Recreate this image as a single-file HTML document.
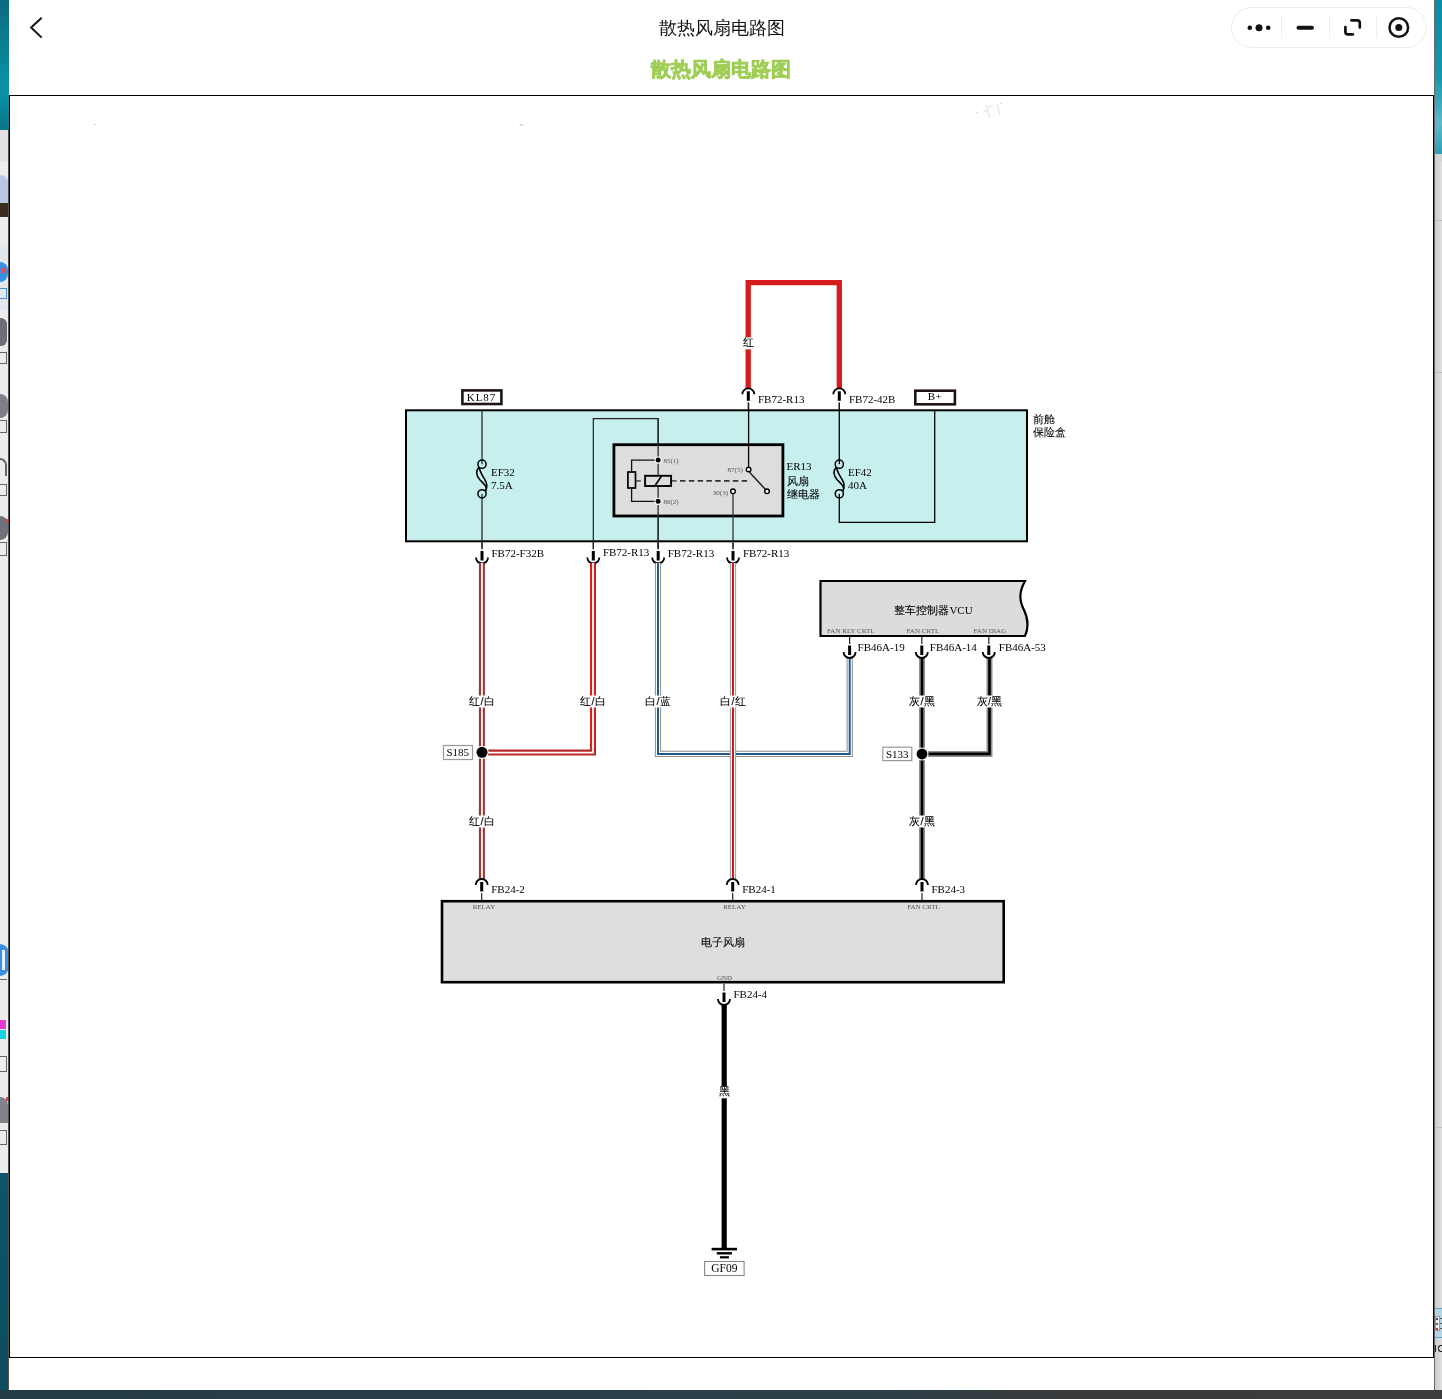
<!DOCTYPE html>
<html><head><meta charset="utf-8"><title>散热风扇电路图</title>
<style>
html,body{margin:0;padding:0;width:1442px;height:1399px;overflow:hidden;background:#2f3b40;}
.abs{position:absolute;}
</style></head><body>
<!-- left app strip -->
<div class="abs" style="left:0;top:0;width:9px;height:130px;background:linear-gradient(180deg,#0c6a80 0%,#0a8599 45%,#0a93a8 70%,#0b7388 100%)"></div>
<div class="abs" style="left:0;top:130px;width:9px;height:1043px;background:#ececec"></div>
<div class="abs" style="left:0;top:130px;width:9px;height:32px;background:#e2e2e2"></div>
<div class="abs" style="left:0;top:175px;width:9px;height:28px;background:#b7c9e6;border-radius:0 10px 0 0"></div>
<div class="abs" style="left:0;top:203px;width:9px;height:14px;background:#3b2c22"></div>
<div class="abs" style="left:0;top:245px;width:9px;height:65px;background:#e3e8ef"></div>
<div class="abs" style="left:0;top:262px;width:8px;height:20px;background:#3b8fe0;border-radius:0 8px 8px 0"></div>
<div class="abs" style="left:2px;top:268px;width:4px;height:5px;background:#e84a5f"></div>
<div class="abs" style="left:0;top:288px;width:7px;height:11px;border:1px solid #4a90d9;border-left:0;box-sizing:border-box"></div>
<div class="abs" style="left:0;top:318px;width:7px;height:28px;background:#6c6f78;border-radius:0 6px 6px 0"></div>
<div class="abs" style="left:0;top:352px;width:7px;height:12px;border:1px solid #666;border-left:0;box-sizing:border-box"></div>
<div class="abs" style="left:0;top:394px;width:8px;height:24px;background:#7d808a;border-radius:0 8px 8px 0"></div>
<div class="abs" style="left:0;top:420px;width:7px;height:13px;border:1px solid #666;border-left:0;box-sizing:border-box"></div>
<div class="abs" style="left:0;top:458px;width:7px;height:18px;border:2px solid #666;border-left:0;border-bottom:0;border-radius:0 8px 0 0;box-sizing:border-box"></div>
<div class="abs" style="left:0;top:484px;width:7px;height:12px;border:1px solid #666;border-left:0;box-sizing:border-box"></div>
<div class="abs" style="left:0;top:516px;width:8px;height:24px;background:#6f727b;border-radius:0 8px 8px 0"></div>
<div class="abs" style="left:6px;top:519px;width:3px;height:4px;background:#e0404c"></div>
<div class="abs" style="left:0;top:542px;width:7px;height:14px;border:1px solid #666;border-left:0;box-sizing:border-box"></div>
<div class="abs" style="left:0;top:944px;width:9px;height:32px;background:#3b8fe6;border-radius:0 9px 9px 0"></div>
<div class="abs" style="left:2px;top:950px;width:3px;height:20px;background:#eaf2ff"></div>
<div class="abs" style="left:0;top:979px;width:7px;height:13px;border-top:1px solid #666"></div>
<div class="abs" style="left:0;top:1020px;width:6px;height:9px;background:#e83ad8"></div>
<div class="abs" style="left:0;top:1030px;width:6px;height:9px;background:#19d3e0"></div>
<div class="abs" style="left:0;top:1056px;width:7px;height:16px;border:1px solid #666;border-left:0;box-sizing:border-box"></div>
<div class="abs" style="left:0;top:1097px;width:8px;height:26px;background:#80838c;border-radius:0 8px 0 0"></div>
<div class="abs" style="left:6px;top:1097px;width:3px;height:4px;background:#e0404c"></div>
<div class="abs" style="left:0;top:1130px;width:7px;height:15px;border:1px solid #666;border-left:0;box-sizing:border-box"></div>
<div class="abs" style="left:0;top:1173px;width:9px;height:217px;background:linear-gradient(180deg,#0f5468,#0d4c5e)"></div>
<div class="abs" style="left:8px;top:130px;width:1px;height:1260px;background:#555"></div>
<div class="abs" style="left:0;top:1390px;width:1442px;height:9px;background:linear-gradient(90deg,#243c46 0%,#2b3f47 60%,#3a3a3a 75%,#3c3c3c 100%)"></div>
<!-- right app strip -->
<div class="abs" style="left:1434px;top:0;width:8px;height:154px;background:linear-gradient(180deg,#0a8ea5 0%,#1597ad 50%,#5fb9c8 80%,#2b9fb5 100%)"></div>
<div class="abs" style="left:1434px;top:154px;width:8px;height:1236px;background:linear-gradient(90deg,#c9c9c9,#dedede)"></div>
<div class="abs" style="left:1434px;top:154px;width:8px;height:8px;background:#d4d4d4"></div>
<div class="abs" style="left:1434px;top:220px;width:8px;height:1px;background:#bdbdbd"></div>
<div class="abs" style="left:1434px;top:372px;width:8px;height:1px;background:#bdbdbd"></div>
<div class="abs" style="left:1434px;top:1127px;width:8px;height:1px;background:#bdbdbd"></div>
<div class="abs" style="left:1434px;top:1308px;width:8px;height:30px;background:#b4d4e6;border-top:1.5px solid #5ea3d0;border-bottom:1.5px solid #5ea3d0;box-sizing:border-box"></div>
<div class="abs" style="left:1434.5px;top:1316px;width:5px;height:15px;background:#eee;border:1px solid #999;box-sizing:border-box"></div>
<div class="abs" style="left:1436px;top:1318px;width:2px;height:2px;background:#357"></div>
<div class="abs" style="left:1436px;top:1323px;width:2px;height:2px;background:#665"></div>
<div class="abs" style="left:1436px;top:1328px;width:2px;height:2px;background:#b32"></div>
<div class="abs" style="left:1440px;top:1318px;width:2px;height:1px;background:#555"></div>
<div class="abs" style="left:1440px;top:1323px;width:2px;height:1px;background:#555"></div>
<div class="abs" style="left:1440px;top:1328px;width:2px;height:1px;background:#555"></div>
<div class="abs" style="left:1434.5px;top:1345px;width:1.5px;height:7px;background:#222"></div>
<div class="abs" style="left:1437.5px;top:1345px;width:6px;height:7px;border:1.5px solid #222;border-right:0;border-radius:3px 0 0 3px;box-sizing:border-box"></div>
<div class="abs" style="left:1434px;top:0;width:1px;height:1390px;background:#666"></div>
<!-- window -->
<div class="abs" style="left:9px;top:0;width:1425px;height:1390px;background:#fff"></div>
<svg class="abs" style="left:0;top:0;will-change:transform" width="1442" height="1399" viewBox="0 0 1442 1399">
<rect x="9" y="0" width="1425" height="1390" fill="#fff"/>
<path d="M94 124.5 L96 124.5" stroke="#d0d0d0" stroke-width="1.2" fill="none" />
<path d="M519.5 124.5 L523 125.5" stroke="#d4d4d4" stroke-width="1.4" fill="none" />
<path d="M975 112 L978 113 M986 105 L990 118 M988 107 L993 106 M997 104 L1000 115 M999 104 L1002 103 M983 111 L987 111" stroke="#dadada" stroke-width="0.9" fill="none" />
<rect x="406" y="410.3" width="621" height="131" fill="#c6efee" stroke="#000" stroke-width="2"/>
<text x="1033" y="423" font-size="11" fill="#000" text-anchor="start" font-family='"Liberation Sans",sans-serif' stroke="#000" stroke-width="0.08">前舱</text>
<text x="1033" y="436" font-size="11" fill="#000" text-anchor="start" font-family='"Liberation Sans",sans-serif' stroke="#000" stroke-width="0.08">保险盒</text>
<rect x="462.4" y="390.4" width="39" height="13.6" fill="#fff" stroke="#1e1414" stroke-width="2.6"/>
<text x="481.5" y="400.6" font-size="11" fill="#000" text-anchor="middle" font-family='"Liberation Serif",serif' letter-spacing="0.9">KL87</text>
<rect x="915.3" y="390.7" width="39.6" height="13.6" fill="#fff" stroke="#1e1414" stroke-width="2.6"/>
<text x="935" y="400.4" font-size="11" fill="#000" text-anchor="middle" font-family='"Liberation Serif",serif' letter-spacing="0.5">B+</text>
<line x1="482" y1="411" x2="482" y2="548.5" stroke="#2a2a2a" stroke-width="1.3" />
<rect x="480" y="464.2" width="4" height="29.6" fill="#c6efee"/>
<circle cx="482" cy="464.2" r="4.1" fill="none" stroke="#000" stroke-width="1.5"/>
<circle cx="482" cy="493.8" r="4.1" fill="none" stroke="#000" stroke-width="1.5"/>
<path d="M479 467 C475.5 471 476.5 476 480 480 C484 484 488 487 485.5 491" stroke="#000" stroke-width="1.5" fill="none" />
<path d="M479 467 C480 472 482 475 484.5 479 C487 483 488 487 485.5 491" stroke="#000" stroke-width="1.5" fill="none" />
<text x="491" y="476" font-size="11" fill="#000" text-anchor="start" font-family='"Liberation Serif",serif' >EF32</text>
<text x="491" y="489" font-size="11" fill="#000" text-anchor="start" font-family='"Liberation Serif",serif' >7.5A</text>
<line x1="839.3" y1="403" x2="839.3" y2="522.4" stroke="#000" stroke-width="1.3" />
<line x1="838.7" y1="522.4" x2="935" y2="522.4" stroke="#000" stroke-width="1.3" />
<line x1="934.7" y1="411" x2="934.7" y2="523" stroke="#000" stroke-width="1.3" />
<rect x="837.3" y="464.2" width="4" height="29.6" fill="#c6efee"/>
<circle cx="839.3" cy="464.2" r="4.1" fill="none" stroke="#000" stroke-width="1.5"/>
<circle cx="839.3" cy="493.8" r="4.1" fill="none" stroke="#000" stroke-width="1.5"/>
<path d="M836.3 467 C832.8 471 833.8 476 837.3 480 C841.3 484 845.3 487 842.8 491" stroke="#000" stroke-width="1.5" fill="none" />
<path d="M836.3 467 C837.3 472 839.3 475 841.8 479 C844.3 483 845.3 487 842.8 491" stroke="#000" stroke-width="1.5" fill="none" />
<text x="848" y="476" font-size="11" fill="#000" text-anchor="start" font-family='"Liberation Serif",serif' >EF42</text>
<text x="848" y="489" font-size="11" fill="#000" text-anchor="start" font-family='"Liberation Serif",serif' >40A</text>
<path d="M593.3 548.5 L593.3 418.6 L658.2 418.6 L658.2 548.5" stroke="#222" stroke-width="1.2" fill="none" />
<rect x="613.9" y="444.7" width="169" height="71.3" fill="#dcdddc" stroke="#000" stroke-width="2.8"/>
<line x1="658.1" y1="418.6" x2="658.1" y2="548.5" stroke="#2a2a2a" stroke-width="1.3" />
<path d="M655 460.1 L631.6 460.1 L631.6 501.3 L655 501.3" stroke="#111" stroke-width="1.3" fill="none" />
<rect x="627.9" y="472" width="7.6" height="16" fill="#dcdddc" stroke="#000" stroke-width="1.7"/>
<line x1="636" y1="480.9" x2="640.8" y2="480.9" stroke="#444" stroke-width="1.5" />
<line x1="672" y1="480.9" x2="676.6" y2="480.9" stroke="#444" stroke-width="1.5" />
<rect x="645.1" y="475.8" width="26" height="10.2" fill="#dcdddc" stroke="#000" stroke-width="1.9"/>
<line x1="654.8" y1="486" x2="661.8" y2="475.6" stroke="#000" stroke-width="1.7" />
<circle cx="658.1" cy="460.1" r="3.6" fill="#fff"/>
<circle cx="658.1" cy="501.3" r="3.6" fill="#fff"/>
<circle cx="658.1" cy="460.1" r="2.5" fill="#000"/>
<circle cx="658.1" cy="501.3" r="2.5" fill="#000"/>
<text x="663.5" y="462.5" font-size="7" fill="#555" text-anchor="start" font-family='"Liberation Serif",serif' >85(1)</text>
<text x="663.5" y="504" font-size="7" fill="#555" text-anchor="start" font-family='"Liberation Serif",serif' >86(2)</text>
<line x1="680" y1="480.9" x2="748" y2="480.9" stroke="#333" stroke-width="1.6" stroke-dasharray="5.5 3.3"/>
<line x1="748.6" y1="403" x2="748.6" y2="467.5" stroke="#000" stroke-width="1.3" />
<line x1="749.5" y1="472.3" x2="765.6" y2="489.6" stroke="#222" stroke-width="1.5" />
<circle cx="748.6" cy="469.5" r="2.3" fill="#fff" stroke="#000" stroke-width="1.4"/>
<circle cx="767" cy="491.3" r="2.3" fill="#fff" stroke="#000" stroke-width="1.4"/>
<line x1="733" y1="493.6" x2="733" y2="548.5" stroke="#333" stroke-width="1.3" />
<circle cx="733" cy="491.3" r="2.3" fill="#fff" stroke="#000" stroke-width="1.4"/>
<text x="727.6" y="472.3" font-size="7" fill="#555" text-anchor="start" font-family='"Liberation Serif",serif' >87(5)</text>
<text x="712.8" y="494.6" font-size="7" fill="#555" text-anchor="start" font-family='"Liberation Serif",serif' >30(3)</text>
<text x="786.5" y="470" font-size="11" fill="#000" text-anchor="start" font-family='"Liberation Serif",serif' >ER13</text>
<text x="786.5" y="485" font-size="11" fill="#000" text-anchor="start" font-family='"Liberation Sans",sans-serif' stroke="#000" stroke-width="0.08">风扇</text>
<text x="786.5" y="498" font-size="11" fill="#000" text-anchor="start" font-family='"Liberation Sans",sans-serif' stroke="#000" stroke-width="0.08">继电器</text>
<path d="M748.2 388.3 L748.2 282.6 L839.3 282.6 L839.3 388.3" stroke="#d71a1c" stroke-width="5.3" fill="none" stroke-linejoin="miter" stroke-linecap="butt"/>
<rect x="742.2" y="337.3" width="12" height="12" fill="#fff"/>
<text x="748.2" y="346.3" font-size="11" fill="#000" text-anchor="middle" font-family='"Liberation Sans",sans-serif' stroke="#000" stroke-width="0.08">红</text>
<line x1="748.3" y1="402.3" x2="748.3" y2="409.3" stroke="#222" stroke-width="1.2" />
<rect x="746.8" y="391.3" width="3" height="9.5" fill="#000"/>
<path d="M742.3 394.3 A6 6 0 0 1 754.3 394.3" stroke="#000" stroke-width="1.8" fill="none" />
<text x="758" y="403" font-size="11" fill="#000" text-anchor="start" font-family='"Liberation Serif",serif' >FB72-R13</text>
<line x1="839.3" y1="402.3" x2="839.3" y2="409.3" stroke="#222" stroke-width="1.2" />
<rect x="837.8" y="391.3" width="3" height="9.5" fill="#000"/>
<path d="M833.3 394.3 A6 6 0 0 1 845.3 394.3" stroke="#000" stroke-width="1.8" fill="none" />
<text x="849" y="403" font-size="11" fill="#000" text-anchor="start" font-family='"Liberation Serif",serif' >FB72-42B</text>
<line x1="482" y1="542.5" x2="482" y2="549.5" stroke="#222" stroke-width="1.2" />
<rect x="480.5" y="551.0" width="3" height="9.5" fill="#000"/>
<path d="M476 557.5 A6 6 0 0 0 488 557.5" stroke="#000" stroke-width="1.8" fill="none" />
<text x="491.5" y="557" font-size="11" fill="#000" text-anchor="start" font-family='"Liberation Serif",serif' >FB72-F32B</text>
<line x1="593.3" y1="542.5" x2="593.3" y2="549.5" stroke="#222" stroke-width="1.2" />
<rect x="591.8" y="551.0" width="3" height="9.5" fill="#000"/>
<path d="M587.3 557.5 A6 6 0 0 0 599.3 557.5" stroke="#000" stroke-width="1.8" fill="none" />
<text x="602.9" y="556" font-size="11" fill="#000" text-anchor="start" font-family='"Liberation Serif",serif' >FB72-R13</text>
<line x1="658.2" y1="542.5" x2="658.2" y2="549.5" stroke="#222" stroke-width="1.2" />
<rect x="656.7" y="551.0" width="3" height="9.5" fill="#000"/>
<path d="M652.2 557.5 A6 6 0 0 0 664.2 557.5" stroke="#000" stroke-width="1.8" fill="none" />
<text x="667.7" y="557" font-size="11" fill="#000" text-anchor="start" font-family='"Liberation Serif",serif' >FB72-R13</text>
<line x1="733" y1="542.5" x2="733" y2="549.5" stroke="#222" stroke-width="1.2" />
<rect x="731.5" y="551.0" width="3" height="9.5" fill="#000"/>
<path d="M727 557.5 A6 6 0 0 0 739 557.5" stroke="#000" stroke-width="1.8" fill="none" />
<text x="742.9" y="557" font-size="11" fill="#000" text-anchor="start" font-family='"Liberation Serif",serif' >FB72-R13</text>
<path d="M481.9 563 L481.9 880" stroke="#a33434" stroke-width="6.0" fill="none" stroke-linejoin="miter"/>
<path d="M481.9 563 L481.9 880" stroke="#fff" stroke-width="1.8" fill="none" stroke-linejoin="miter"/>
<path d="M482 752.6 L593 752.6 L593 563" stroke="#b82a2a" stroke-width="6.0" fill="none" stroke-linejoin="miter"/>
<path d="M482 752.6 L593 752.6 L593 563" stroke="#fff" stroke-width="1.8" fill="none" stroke-linejoin="miter"/>
<path d="M593 563 L593 749.6" stroke="#d22323" stroke-width="6.0" fill="none" stroke-linejoin="miter"/>
<path d="M593 563 L593 749.6" stroke="#fff" stroke-width="1.8" fill="none" stroke-linejoin="miter"/>
<path d="M658 563 L658 753.9 L849.7 753.9 L849.7 657" stroke="#8c8c8c" stroke-width="6.2" fill="none" stroke-linejoin="miter"/>
<path d="M658 563 L658 753.9 L849.7 753.9 L849.7 657" stroke="#fff" stroke-width="4.2" fill="none" stroke-linejoin="miter"/>
<path d="M658 563 L658 753.9 L849.7 753.9 L849.7 657" stroke="#1b5b92" stroke-width="2.0" fill="none" stroke-linejoin="miter"/>
<path d="M733 563 L733 880" stroke="#9a9a9a" stroke-width="6.2" fill="none" stroke-linejoin="miter"/>
<path d="M733 563 L733 880" stroke="#fff" stroke-width="4.2" fill="none" stroke-linejoin="miter"/>
<path d="M733 563 L733 880" stroke="#d01818" stroke-width="2.0" fill="none" stroke-linejoin="miter"/>
<path d="M922 657 L922 880" stroke="#8f8f8f" stroke-width="6.0" fill="none" stroke-linejoin="miter"/>
<path d="M922 657 L922 880" stroke="#000" stroke-width="2.6" fill="none" stroke-linejoin="miter"/>
<path d="M989.5 657 L989.5 753.9 L922 753.9" stroke="#8f8f8f" stroke-width="6.0" fill="none" stroke-linejoin="miter"/>
<path d="M989.5 657 L989.5 753.9 L922 753.9" stroke="#000" stroke-width="2.6" fill="none" stroke-linejoin="miter"/>
<rect x="468.5" y="695.5" width="27" height="12" fill="#fff"/>
<text x="482" y="704.5" font-size="11" fill="#000" text-anchor="middle" font-family='"Liberation Sans",sans-serif' stroke="#000" stroke-width="0.08">红/白</text>
<rect x="579.5" y="695.5" width="27" height="12" fill="#fff"/>
<text x="593" y="704.5" font-size="11" fill="#000" text-anchor="middle" font-family='"Liberation Sans",sans-serif' stroke="#000" stroke-width="0.08">红/白</text>
<rect x="644.5" y="695.5" width="27" height="12" fill="#fff"/>
<text x="658" y="704.5" font-size="11" fill="#000" text-anchor="middle" font-family='"Liberation Sans",sans-serif' stroke="#000" stroke-width="0.08">白/蓝</text>
<rect x="719.5" y="695.5" width="27" height="12" fill="#fff"/>
<text x="733" y="704.5" font-size="11" fill="#000" text-anchor="middle" font-family='"Liberation Sans",sans-serif' stroke="#000" stroke-width="0.08">白/红</text>
<rect x="908.5" y="695.5" width="27" height="12" fill="#fff"/>
<text x="922" y="704.5" font-size="11" fill="#000" text-anchor="middle" font-family='"Liberation Sans",sans-serif' stroke="#000" stroke-width="0.08">灰/黑</text>
<rect x="976.0" y="695.5" width="27" height="12" fill="#fff"/>
<text x="989.5" y="704.5" font-size="11" fill="#000" text-anchor="middle" font-family='"Liberation Sans",sans-serif' stroke="#000" stroke-width="0.08">灰/黑</text>
<rect x="468.5" y="815.5" width="27" height="12" fill="#fff"/>
<text x="482" y="824.5" font-size="11" fill="#000" text-anchor="middle" font-family='"Liberation Sans",sans-serif' stroke="#000" stroke-width="0.08">红/白</text>
<rect x="908.5" y="815.5" width="27" height="12" fill="#fff"/>
<text x="922" y="824.5" font-size="11" fill="#000" text-anchor="middle" font-family='"Liberation Sans",sans-serif' stroke="#000" stroke-width="0.08">灰/黑</text>
<circle cx="482" cy="752.3" r="6.6" fill="#fff"/>
<circle cx="482" cy="752.3" r="5.5" fill="#000"/>
<circle cx="922" cy="754" r="6.5" fill="#fff"/>
<circle cx="922" cy="754" r="5.4" fill="#000"/>
<rect x="443.5" y="745.5" width="29" height="14" fill="#fff" stroke="#999" stroke-width="1.2"/>
<text x="457.8" y="756.3" font-size="11" fill="#000" text-anchor="middle" font-family='"Liberation Serif",serif' >S185</text>
<rect x="882.8" y="747.2" width="29" height="13.4" fill="#fff" stroke="#999" stroke-width="1.2"/>
<text x="897.2" y="758" font-size="11" fill="#000" text-anchor="middle" font-family='"Liberation Serif",serif' >S133</text>
<path d="M820.5 581 L1025 581 C1019 592 1019 600 1024 610 C1029 620 1028 630 1025 636 L820.5 636 Z" stroke="#000" stroke-width="2.2" fill="#dcdcdc" />
<text x="933.5" y="614" font-size="11" text-anchor="middle" fill="#000" stroke="#000" stroke-width="0.08" font-family='"Liberation Sans",sans-serif'>整车控制器<tspan font-family='"Liberation Serif",serif' stroke-width="0">VCU</tspan></text>
<text x="827" y="633" font-size="7" fill="#555" text-anchor="start" font-family='"Liberation Serif",serif' >FAN RLY CRTL</text>
<text x="906.5" y="633" font-size="7" fill="#555" text-anchor="start" font-family='"Liberation Serif",serif' >FAN CRTL</text>
<text x="973.5" y="633" font-size="7" fill="#555" text-anchor="start" font-family='"Liberation Serif",serif' >FAN DIAG</text>
<line x1="849.6" y1="637" x2="849.6" y2="644" stroke="#222" stroke-width="1.2" />
<rect x="848.1" y="645.5" width="3" height="9.5" fill="#000"/>
<path d="M843.6 652 A6 6 0 0 0 855.6 652" stroke="#000" stroke-width="1.8" fill="none" />
<text x="857.6" y="651" font-size="11" fill="#000" text-anchor="start" font-family='"Liberation Serif",serif' >FB46A-19</text>
<line x1="921.8" y1="637" x2="921.8" y2="644" stroke="#222" stroke-width="1.2" />
<rect x="920.3" y="645.5" width="3" height="9.5" fill="#000"/>
<path d="M915.8 652 A6 6 0 0 0 927.8 652" stroke="#000" stroke-width="1.8" fill="none" />
<text x="929.8" y="651" font-size="11" fill="#000" text-anchor="start" font-family='"Liberation Serif",serif' >FB46A-14</text>
<line x1="988.8" y1="637" x2="988.8" y2="644" stroke="#222" stroke-width="1.2" />
<rect x="987.3" y="645.5" width="3" height="9.5" fill="#000"/>
<path d="M982.8 652 A6 6 0 0 0 994.8 652" stroke="#000" stroke-width="1.8" fill="none" />
<text x="998.8" y="651" font-size="11" fill="#000" text-anchor="start" font-family='"Liberation Serif",serif' >FB46A-53</text>
<rect x="442" y="901.2" width="561.7" height="81" fill="#dddedd" stroke="#000" stroke-width="2.6"/>
<text x="723" y="946" font-size="11" fill="#000" text-anchor="middle" font-family='"Liberation Sans",sans-serif' stroke="#000" stroke-width="0.08">电子风扇</text>
<text x="484" y="909" font-size="7" fill="#555" text-anchor="middle" font-family='"Liberation Serif",serif' >RELAY</text>
<text x="734.5" y="909" font-size="7" fill="#555" text-anchor="middle" font-family='"Liberation Serif",serif' >RELAY</text>
<text x="923.5" y="909" font-size="7" fill="#555" text-anchor="middle" font-family='"Liberation Serif",serif' >FAN CRTL</text>
<text x="724.5" y="980" font-size="7" fill="#555" text-anchor="middle" font-family='"Liberation Serif",serif' >GND</text>
<line x1="481.7" y1="893" x2="481.7" y2="900" stroke="#222" stroke-width="1.2" />
<rect x="480.2" y="882" width="3" height="9.5" fill="#000"/>
<path d="M475.7 885 A6 6 0 0 1 487.7 885" stroke="#000" stroke-width="1.8" fill="none" />
<text x="491.2" y="893" font-size="11" fill="#000" text-anchor="start" font-family='"Liberation Serif",serif' >FB24-2</text>
<line x1="732.7" y1="893" x2="732.7" y2="900" stroke="#222" stroke-width="1.2" />
<rect x="731.2" y="882" width="3" height="9.5" fill="#000"/>
<path d="M726.7 885 A6 6 0 0 1 738.7 885" stroke="#000" stroke-width="1.8" fill="none" />
<text x="742.2" y="893" font-size="11" fill="#000" text-anchor="start" font-family='"Liberation Serif",serif' >FB24-1</text>
<line x1="922" y1="893" x2="922" y2="900" stroke="#222" stroke-width="1.2" />
<rect x="920.5" y="882" width="3" height="9.5" fill="#000"/>
<path d="M916 885 A6 6 0 0 1 928 885" stroke="#000" stroke-width="1.8" fill="none" />
<text x="931.5" y="893" font-size="11" fill="#000" text-anchor="start" font-family='"Liberation Serif",serif' >FB24-3</text>
<line x1="724" y1="984" x2="724" y2="991" stroke="#222" stroke-width="1.2" />
<rect x="722.5" y="992.5" width="3" height="9.5" fill="#000"/>
<path d="M718 999 A6 6 0 0 0 730 999" stroke="#000" stroke-width="1.8" fill="none" />
<text x="733.5" y="998" font-size="11" fill="#000" text-anchor="start" font-family='"Liberation Serif",serif' >FB24-4</text>
<path d="M724.2 1004 L724.2 1248" stroke="#000" stroke-width="5.2" fill="none" stroke-linejoin="miter"/>
<rect x="717.7" y="1086.3" width="13" height="12" fill="#fff"/>
<text x="724.2" y="1095.3" font-size="11" fill="#000" text-anchor="middle" font-family='"Liberation Sans",sans-serif' stroke="#000" stroke-width="0.08">黑</text>
<rect x="711.6" y="1247.8" width="25.4" height="2.6" fill="#000"/>
<rect x="716.8" y="1252.1" width="15.1" height="2.4" fill="#000"/>
<rect x="719.9" y="1256.2" width="9" height="2.2" fill="#000"/>
<rect x="704.6" y="1261.5" width="39.5" height="14" fill="#fff" stroke="#888" stroke-width="1.1"/>
<text x="724.3" y="1271.6" font-size="11.5" fill="#000" text-anchor="middle" font-family='"Liberation Serif",serif' >GF09</text>
</svg>
<!-- header -->
<div class="abs" style="left:9px;top:0;width:1425px;height:95px;background:#fff"></div>
<svg class="abs" style="left:0;top:0" width="1442" height="96">
  <path d="M41.7 17.7 L31.1 27.5 L41.7 37.6" fill="none" stroke="#111" stroke-width="2"/>
  <text x="721.5" y="33.5" font-size="17.5" text-anchor="middle" fill="#111" font-family='"Liberation Sans",sans-serif'>散热风扇电路图</text>
  <text x="721" y="76" font-size="20" font-weight="bold" text-anchor="middle" fill="#9fcd55" stroke="#9fcd55" stroke-width="0.7" font-family='"Liberation Sans",sans-serif'>散热风扇电路图</text>
  <rect x="1231.5" y="7.5" width="195" height="40" rx="20" ry="20" fill="#fff" stroke="#ececec" stroke-width="1"/>
  <line x1="1281.6" y1="15.5" x2="1281.6" y2="38.5" stroke="#ececec" stroke-width="1"/>
  <line x1="1329.6" y1="15.5" x2="1329.6" y2="38.5" stroke="#ececec" stroke-width="1"/>
  <line x1="1376.7" y1="15.5" x2="1376.7" y2="38.5" stroke="#ececec" stroke-width="1"/>
  <circle cx="1249.8" cy="27.7" r="2.3" fill="#111"/>
  <circle cx="1259" cy="27.7" r="3.5" fill="#111"/>
  <circle cx="1268.2" cy="27.7" r="2.3" fill="#111"/>
  <line x1="1298.5" y1="27.8" x2="1312" y2="27.8" stroke="#111" stroke-width="4" stroke-linecap="round"/>
  <path d="M1351.3 20.3 H1357.2 A2.6 2.6 0 0 1 1359.8 22.9 V27.5 M1345.4 27 V31.8 A2.6 2.6 0 0 0 1348 34.4 H1352.9" fill="none" stroke="#111" stroke-width="2.7" stroke-linecap="round" stroke-linejoin="round"/>
  <circle cx="1398.8" cy="27.5" r="9.3" fill="none" stroke="#111" stroke-width="2.5"/>
  <circle cx="1398.8" cy="27.5" r="3.5" fill="#111"/>
  <line x1="9" y1="95.5" x2="1434" y2="95.5" stroke="#000" stroke-width="1.2"/>
</svg>
<!-- frame borders -->
<div class="abs" style="left:9px;top:95px;width:1px;height:1263px;background:#000"></div>
<div class="abs" style="left:1433px;top:95px;width:1.3px;height:1263px;background:#000"></div>
<div class="abs" style="left:9px;top:1357px;width:1425px;height:1px;background:#000"></div>
</body></html>
